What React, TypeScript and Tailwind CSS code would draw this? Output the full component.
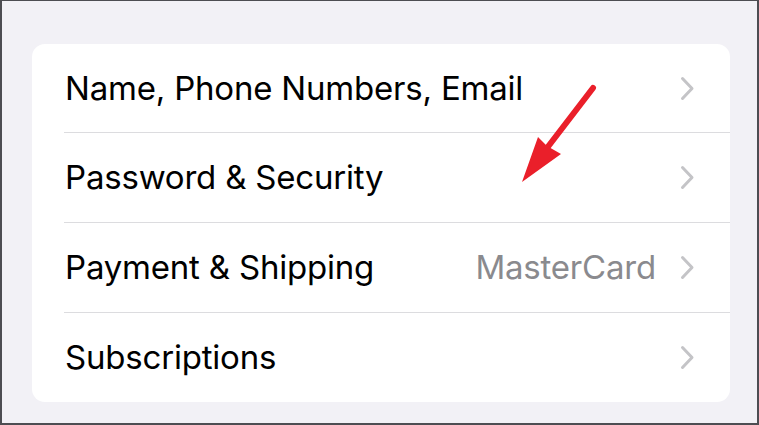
import React from "react";

function Chevron() {
  return (
    <svg width="15" height="25" viewBox="0 0 15 25" className="shrink-0">
      <path d="M2.5 2.5 L12 12.5 L2.5 22.5" fill="none" stroke="#c4c4c7" strokeWidth="3" strokeLinecap="round" strokeLinejoin="round" />
    </svg>
  );
}

type Row = { label: string; value?: string; h: string; last?: boolean };

const rows: Row[] = [
  { label: "Name, Phone Numbers, Email", h: "h-[89px]" },
  { label: "Password & Security", h: "h-[90px]" },
  { label: "Payment & Shipping", value: "MasterCard", h: "h-[90px]" },
  { label: "Subscriptions", h: "h-[89px]", last: true },
];

export default function App() {
  return (
    <div
      className="relative w-[759px] h-[425px] bg-[#f2f1f6] border-l-2 border-r-2 border-t border-b-2 border-[#4d4d52] overflow-hidden"
      style={{ fontFamily: "Inter, 'Noto Sans', sans-serif" }}
    >
      <div className="pt-[43px] pl-[30px]">
        <div className="w-[698px] h-[358px] bg-white rounded-[13px] pl-[32px] flex flex-col">
          {rows.map((r) => (
            <div
              key={r.label}
              className={`${r.h} flex items-center pr-[35px] ${r.last ? "" : "border-b border-[#dcdcdf]"}`}
            >
              <span className="text-[33px] leading-none text-black tracking-[-0.2px] pl-[1px]">{r.label}</span>
              <div className="flex-1" />
              {r.value && (
                <span className="text-[33px] leading-none text-[#8a8a8e] tracking-[-0.2px] mr-[24px]">{r.value}</span>
              )}
              <Chevron />
            </div>
          ))}
        </div>
      </div>
      <svg className="absolute left-0 top-0 pointer-events-none" width="759" height="425" viewBox="0 0 759 425">
        <line x1="591" y1="87" x2="545" y2="147" stroke="#ea1f2a" strokeWidth="6" strokeLinecap="round" />
        <polygon points="520,181 536,136 545,145 559,153" fill="#ea1f2a" />
      </svg>
    </div>
  );
}
